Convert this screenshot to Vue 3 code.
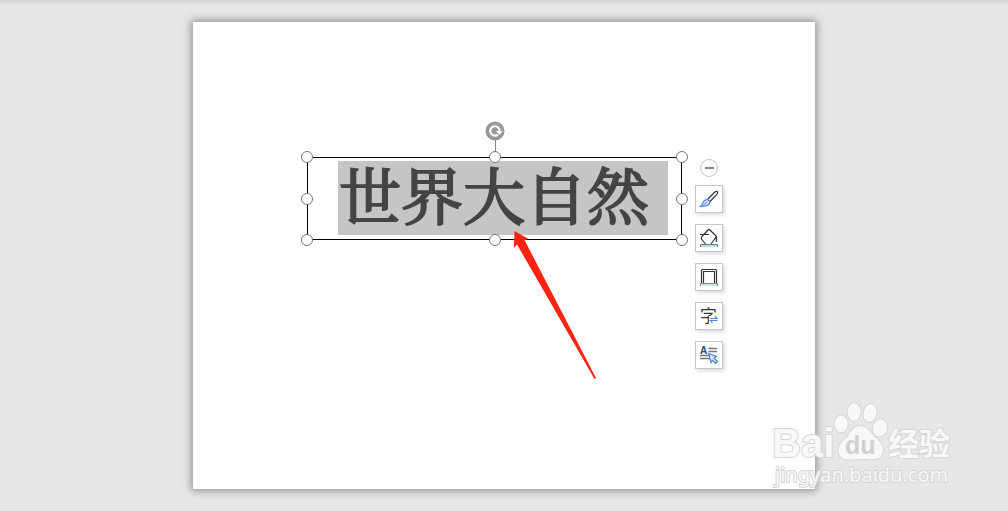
<script setup>
import { ref } from 'vue'

const title = ref('世界大自然')
const handles = ['nw', 'n', 'ne', 'w', 'e', 'sw', 's', 'se']
</script>

<template>
  <main class="workspace">
    <section class="slide" aria-label="Slide">
      <div class="textbox">
        <p class="selection">{{ title }}</p>
        <span class="stem"></span>
        <button class="rotate" type="button" aria-label="Rotate">
          <svg viewBox="0 0 20 20" fill="none">
            <circle cx="10" cy="10" r="9.5" fill="#999" />
            <path d="M12.8 13.6A4.7 4.7 0 1 1 14.6 10.2" stroke="#fff" stroke-width="2.1" />
            <path d="M11 10h6.6l-3.2 4z" fill="#fff" />
          </svg>
        </button>
        <button
          v-for="h in handles"
          :key="h"
          type="button"
          class="handle"
          :class="h"
          :aria-label="'Resize ' + h"
        ></button>
      </div>

      <div class="tools" role="toolbar" aria-label="Text box tools">
        <button class="collapse" type="button" aria-label="Collapse"></button>
        <button class="tool" type="button" aria-label="Style">
          <svg viewBox="0 0 28 28" fill="none">
            <path d="M12.5 14.5L19.5 7.3Q21.5 5.8 22.5 6.7Q23 7.8 21.8 9.3L15 16.5" stroke="#333" stroke-width="1.2" />
            <path d="M5.5 21.5Q7 20.5 7.5 18.5Q9.5 14.5 12.5 14.7Q15.3 15.8 14.6 18Q13 21.5 5.5 21.5Z" fill="#dce9fb" stroke="#4a82d9" stroke-width="1.2" />
            <path d="M8 20.5L12 17" stroke="#4a82d9" />
          </svg>
        </button>
        <button class="tool" type="button" aria-label="Fill">
          <svg viewBox="0 0 28 28" fill="none">
            <path d="M10.5 20L6.5 15Q6 13.5 7 12.5L13 6Q14 5 15 6L21.5 12.5L16 20M5 10.5H14M21.5 12V18" stroke="#333" stroke-width="1.2" />
            <rect x="5" y="20" width="18" height="3" fill="#b5dfe3" />
            <path d="M5.5 23v-2.5H22.5V23" stroke="#777" />
          </svg>
        </button>
        <button class="tool" type="button" aria-label="Outline">
          <svg viewBox="0 0 28 28" fill="none">
            <path d="M6.5 20V7.5Q6.5 6.5 7.5 6.5H20.5Q21.5 6.5 21.5 7.5V20" stroke="#333" stroke-width="1.2" />
            <path d="M8.5 20V8.5H19.5V20" stroke="#333" stroke-width="1.2" />
            <rect x="5" y="20" width="18" height="3" fill="#c5e8ec" />
            <path d="M5.5 23v-2.5H22.5V23" stroke="#888" />
          </svg>
        </button>
        <button class="tool" type="button" aria-label="Convert text">
          <svg viewBox="0 0 28 28" fill="none">
            <text class="zi" x="5" y="20">字</text>
            <path d="M14 14h9v8h-9z" fill="#fff" />
            <path d="M15 16.5H22L20 14M22.5 18.5H15.5L17.5 21" stroke="#4a8be0" stroke-width="1.2" />
          </svg>
        </button>
        <button class="tool" type="button" aria-label="Text layout">
          <svg viewBox="0 0 28 28" fill="none">
            <text class="letter" x="5" y="13">A</text>
            <path d="M13.5 7.5H22M13.5 10.5H22M5 14.5H14M5 17.5H15" stroke="#777" stroke-width="1.4" />
            <path d="M13.5 12.5L21.5 15.5L19 17L22.5 20.5L20.5 22.5L17.5 19.2L16 21.5Z" fill="#dce9fb" stroke="#4a82d9" stroke-width="1.2" />
          </svg>
        </button>
      </div>

      <svg class="arrow" viewBox="0 0 82 148" aria-hidden="true">
        <path d="M0.5 0L14.5 8L10.5 9L82 147L80.5 148L3 13.5L-0.2 17Z" fill="#ff2412" />
      </svg>
    </section>

    <svg class="watermark" viewBox="0 0 190 90" aria-label="Baidu">
      <g class="mark">
        <text class="bai" x="2" y="57">Bai</text>
        <text class="cn" x="118" y="55">经验</text>
        <text class="site" x="5" y="82">jingyan.baidu.com</text>
        <ellipse cx="71" cy="24" rx="6.5" ry="8.5" />
        <ellipse cx="84" cy="12" rx="6.5" ry="9" />
        <ellipse cx="100" cy="13" rx="6.5" ry="9" transform="rotate(12 100 13)" />
        <ellipse cx="110" cy="28" rx="7" ry="8.5" transform="rotate(18 110 28)" />
        <path d="M90 26C98 26 100 33 106 38C113 44 115 50 111 56C107 61 99 59 90 59C82 59 74 61 70 56C66 49 70 43 76 38C81 33 82 26 90 26Z" />
      </g>
      <text class="du" x="75" y="54">du</text>
    </svg>
  </main>
</template>

<style>
body {
  background: #e7e7e7;
}
</style>

<style scoped>
.workspace {
  position: relative;
  box-sizing: border-box;
  min-height: 100vh;
  padding: 22px 193px;
  display: flex;
  background: linear-gradient(#d2d2d2, #e7e7e7 5px);
  font-family: "Liberation Sans", "Noto Sans CJK SC", sans-serif;
}
.slide {
  position: relative;
  flex: 1;
  background: #fff;
  box-shadow: 0 0 8px 2px rgba(0, 0, 0, 0.36);
}
button {
  margin: 0;
  padding: 0;
  box-sizing: border-box;
}
.textbox {
  position: absolute;
  left: 114px;
  top: 135px;
  padding: 4px 14px 5px 31px;
  outline: 1px solid #000;
  outline-offset: -1px;
}
.selection {
  margin: 0;
  padding: 0 19px 8px 1px;
  background: #c5c5c5;
  color: #444;
  font-family: "Noto Serif CJK SC", "Noto Sans CJK SC", serif;
  font-size: 62px;
  line-height: 66px;
  -webkit-text-stroke: 2px #444;
  white-space: nowrap;
}
.handle {
  position: absolute;
  width: 12px;
  height: 12px;
  border: 1px solid #777;
  border-radius: 50%;
  background: #fff;
  transform: translate(-50%, -50%);
}
.nw, .n, .ne { top: 0; }
.w, .e { top: 50%; }
.sw, .s, .se { top: 100%; }
.nw, .w, .sw { left: 0; }
.n, .s { left: 50%; }
.ne, .e, .se { left: 100%; }
.stem {
  position: absolute;
  left: 50%;
  bottom: 100%;
  width: 1px;
  height: 20px;
  background: #888;
}
.rotate {
  position: absolute;
  left: 50%;
  top: -36px;
  width: 20px;
  height: 20px;
  border: 0;
  background: none;
  transform: translateX(-50%);
}
svg {
  display: block;
}
.tools {
  position: absolute;
  left: 502px;
  top: 137px;
  display: flex;
  flex-direction: column;
  align-items: center;
  gap: 11px;
}
.collapse {
  display: grid;
  place-items: center;
  width: 18px;
  height: 18px;
  margin-bottom: -3px;
  border: 1px solid #c4c4c4;
  border-radius: 50%;
  background: #fff;
}
.collapse::before {
  content: "";
  width: 9px;
  height: 2px;
  background: #888;
}
.tool {
  width: 28px;
  height: 28px;
  border: 1px solid #c6c6c6;
  background: #fff;
  box-shadow: 2px 2px 4px rgba(0, 0, 0, 0.14);
}
.tool svg {
  width: 28px;
  height: 28px;
  margin: -1px;
}
.zi {
  fill: #333;
  font: 17px "Noto Sans CJK SC", sans-serif;
}
.letter {
  fill: #234a86;
  font: bold 10px "Liberation Sans", sans-serif;
}
.arrow {
  position: absolute;
  left: 321px;
  top: 209px;
  width: 82px;
  height: 148px;
  overflow: visible;
}
.watermark {
  position: absolute;
  right: 48px;
  bottom: 21px;
  width: 190px;
  height: 90px;
  overflow: visible;
}
.mark {
  fill: #f8f8f8;
  stroke: #d6d6d6;
  stroke-width: 2px;
  paint-order: stroke;
}
.bai {
  font: bold 40px "Liberation Sans", sans-serif;
}
.cn {
  font: bold 31px "Noto Sans CJK SC", sans-serif;
}
.site {
  font: 20px "Noto Sans", sans-serif;
}
.du {
  fill: #d0d0d0;
  font: bold 25px "Liberation Sans", sans-serif;
}
</style>
